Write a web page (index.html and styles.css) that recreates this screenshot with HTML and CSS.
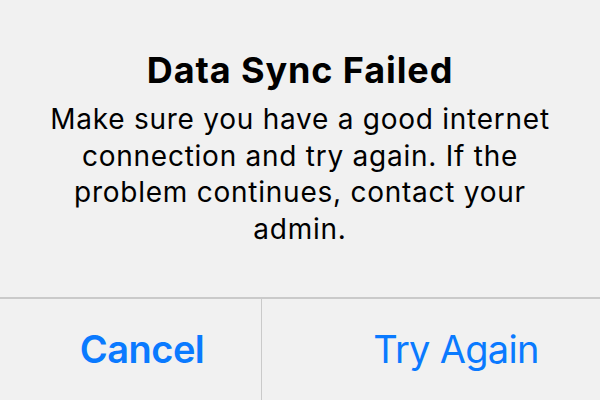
FILE: index.html
```html
<!DOCTYPE html>
<html lang="en">
<head>
<meta charset="utf-8">
<title>Data Sync Failed</title>
<link rel="stylesheet" href="styles.css">
</head>
<body>
<div class="alert">
  <div class="content">
    <h1 class="title">Data Sync Failed</h1>
    <p class="message">Make sure you have a good internet<br>connection and try again. If the<br>problem continues, contact your<br>admin.</p>
  </div>
  <div class="actions">
    <button class="action action-cancel">Cancel</button>
    <button class="action action-retry">Try Again</button>
  </div>
</div>
</body>
</html>
```
FILE: styles.css
```css
html, body {
  margin: 0;
  padding: 0;
  background: #f1f1f1;
}
body {
  width: 600px;
  height: 400px;
  overflow: hidden;
  font-family: Inter, "Noto Sans", "Liberation Sans", sans-serif;
  color: #000;
}
.alert {
  display: flex;
  flex-direction: column;
  height: 400px;
}
.content {
  height: 297px;
  box-sizing: border-box;
  padding-top: 49px;
  text-align: center;
}
.title {
  margin: 0;
  font-size: 36px;
  font-weight: 700;
  line-height: 42px;
  letter-spacing: 0.9px;
}
.message {
  margin: 10px 0 0;
  font-size: 28px;
  font-weight: 400;
  line-height: 36.7px;
  letter-spacing: 0.75px;
}
.actions {
  flex: 1;
  display: flex;
  border-top: 2px solid #cacaca;
}
.action {
  border: 0;
  background: transparent;
  font-family: inherit;
  font-size: 38px;
  color: #0a7aff;
  display: flex;
  align-items: center;
  justify-content: center;
  padding: 0 0 2px;
  margin: 0;
  letter-spacing: -0.5px;
}
.action-cancel {
  width: 262px;
  padding-left: 23px;
  font-weight: 600;
  border-right: 1px solid #cacaca;
}
.action-retry {
  flex: 1;
  padding-left: 50px;
  font-weight: 400;
  letter-spacing: -0.7px;
}
```
